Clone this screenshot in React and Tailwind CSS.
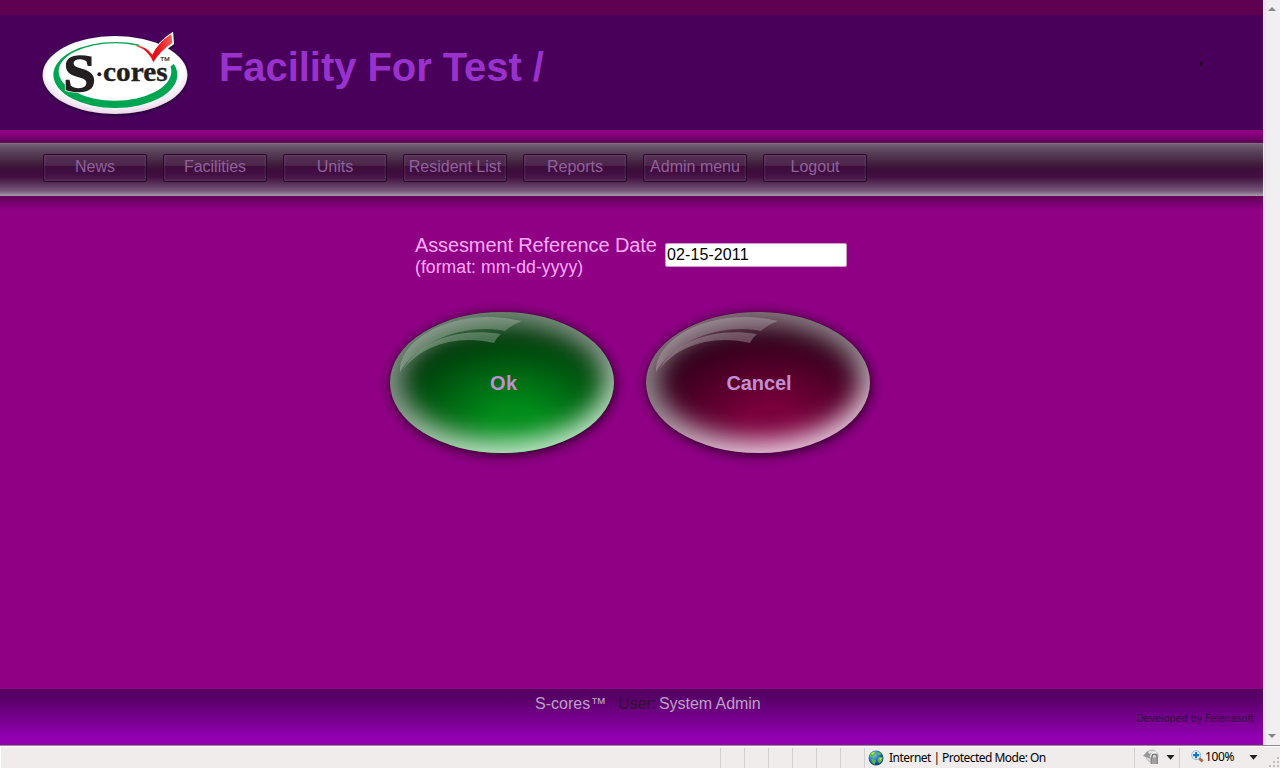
const NAV = ['News', 'Facilities', 'Units', 'Resident List', 'Reports', 'Admin menu', 'Logout'];

function Logo() {
  return (
    <svg className="block h-[110px] w-[170px] shrink-0" viewBox="0 0 510 330">
      <defs>
        <radialGradient id="plate" cx="50%" cy="43%" r="57%">
          <stop offset="80%" stopColor="#fff" />
          <stop offset="100%" stopColor="#ead5ea" />
        </radialGradient>
        <linearGradient id="tick" x1="0" y1="0" x2="1" y2="0">
          <stop offset="0" stopColor="#e8602c" />
          <stop offset=".25" stopColor="#e5141b" />
          <stop offset=".6" stopColor="#e5141b" />
          <stop offset="1" stopColor="#f46058" />
        </linearGradient>
        <clipPath id="ringGap">
          <path d="M0 0H328V120L420 140L436 128L510 118V330H0Z" />
        </clipPath>
        <filter id="plateShadow" x="-10%" y="-10%" width="120%" height="125%">
          <feDropShadow dx="0" dy="4" stdDeviation="4" floodColor="#180020" floodOpacity=".75" />
        </filter>
      </defs>
      <g filter="url(#plateShadow)">
        <ellipse cx="255" cy="165" rx="217" ry="117" fill="url(#plate)" />
        <path d="M366 100 Q386 62 429 35 L432 72 Q398 94 372 128Z" fill="#fff" />
      </g>
      <path clipPath="url(#ringGap)" fillRule="evenodd" fill="#00a551" d="M70 164 A186 98 0 0 1 442 164 A186 100 0 0 1 70 164Z M86 154 A169 84 0 0 1 424 154 A169 88 0 0 1 86 154Z" />
      <path d="M318 76 Q352 82 367 104 Q384 68 424 42 L427 69 Q391 92 370 127 Q356 90 318 78Z" fill="url(#tick)" />
      <text x="100" y="212" fontFamily="Liberation Serif, serif" fontWeight="700" fontSize="160" textLength="98" lengthAdjust="spacingAndGlyphs" fill="#231f20" stroke="#fff" strokeWidth="8" paintOrder="stroke">S</text>
      <text x="100" y="212" fontFamily="Liberation Serif, serif" fontWeight="700" fontSize="160" textLength="98" lengthAdjust="spacingAndGlyphs" fill="#231f20" stroke="#231f20" strokeWidth="4">S</text>
      <circle cx="208" cy="163" r="6" fill="#231f20" />
      <text x="219" y="182" fontFamily="Liberation Serif, serif" fontWeight="700" fontSize="81" textLength="194" lengthAdjust="spacingAndGlyphs" fill="#231f20" stroke="#231f20" strokeWidth="1">cores</text>
      <text x="391" y="123" fontFamily="Liberation Sans, sans-serif" fontSize="18" textLength="28" lengthAdjust="spacingAndGlyphs" fill="#231f20" stroke="#231f20" strokeWidth=".5">TM</text>
    </svg>
  );
}

function OvalButton({ id, label, base, dark, glow, labelX, labelWidth }) {
  return (
    <button type="button" className="block h-[170px] w-[256px] shrink-0 p-0">
      <svg className="block h-[170px] w-[256px]" viewBox="0 0 256 170">
        <defs>
          <clipPath id={id + 'Clip'}><ellipse cx="128" cy="82.5" rx="112" ry="70.5" /></clipPath>
          <radialGradient id={id + 'Base'} gradientUnits="userSpaceOnUse" cx="0" cy="0" r="1" gradientTransform="translate(142 124) scale(128 88)">
            <stop offset="0" stopColor={base} />
            <stop offset=".2" stopColor={base} />
            <stop offset="1" stopColor={dark} />
          </radialGradient>
          <linearGradient id={id + 'Rim'} gradientUnits="userSpaceOnUse" x1="85" y1="12" x2="128" y2="153">
            <stop offset="0" stopColor="#a0a0a0" stopOpacity=".76" />
            <stop offset=".5" stopColor="#b5b5b5" stopOpacity=".78" />
            <stop offset="1" stopColor={glow} stopOpacity=".98" />
          </linearGradient>
          <filter id={id + 'Blur'} x="-30%" y="-30%" width="160%" height="160%"><feGaussianBlur stdDeviation="12" /></filter>
          <filter id={id + 'Shadow'} x="-20%" y="-20%" width="140%" height="140%"><feGaussianBlur stdDeviation="5.5" /></filter>
        </defs>
        <ellipse cx="129" cy="84.5" rx="113" ry="71.5" fill="#250020" opacity=".9" filter={'url(#' + id + 'Shadow)'} />
        <ellipse cx="128" cy="82.5" rx="112" ry="70.5" fill={'url(#' + id + 'Base)'} />
        <g clipPath={'url(#' + id + 'Clip)'}>
          <path fillRule="evenodd" d="M-30 -30H286V200H-30Z M28 82A101 58 0 0 0 230 82A101 58 0 0 0 28 82Z" fill={'url(#' + id + 'Rim)'} filter={'url(#' + id + 'Blur)'} />
        </g>
        <path d="M26 72 C24 40 80 5 148 21 Q137 25 131 31 C91 23 46 40 26 72Z" fill="#fff" fillOpacity=".22" />
        <path d="M29 70 C47 38 88 28 127 34 Q122 38 120 43 C82 34 47 46 29 70Z" fill="#fff" fillOpacity=".25" />
        <text x={labelX} y="90" textLength={labelWidth} fontFamily="Liberation Sans, sans-serif" fontWeight="700" fontSize="20" fill="#c18fd3">{label}</text>
      </svg>
    </button>
  );
}

function Globe() {
  return (
    <svg className="block size-4 shrink-0" viewBox="0 0 16 16">
      <defs>
        <radialGradient id="sea" cx="35%" cy="30%" r="75%">
          <stop offset="0" stopColor="#8cc9f4" /><stop offset=".5" stopColor="#2a70c8" /><stop offset="1" stopColor="#123764" />
        </radialGradient>
      </defs>
      <circle cx="8" cy="8" r="7.5" fill="url(#sea)" />
      <path d="M2 3.5 5 1.2 8.5 2 7 5 5 6 4.5 8 2 6.5Z M9 1.3 13 3.2 12 5.5 9.5 5Z M3 9 7 9.5 8 11 6.5 14.5 4.5 13Z M10.5 7 14.8 7 14 11 11 13.5 9.5 10Z" fill="#55b948" />
      <path d="M3 3.5 5.5 2 7 2.6 4.5 5Z M11.5 8 13.8 8 12 11Z" fill="#b4e56b" />
    </svg>
  );
}

function Caret() {
  return <svg className="block h-[5px] w-[9px] shrink-0" viewBox="0 0 9 5"><path d="M.5 0h8L4.5 4.7Z" fill="#222" /></svg>;
}

function StatusBar() {
  return (
    <footer className="flex h-[23px] w-full border-t border-[#918b91] bg-[#f0eceb] text-black">
      <div className="flex h-full w-full border-l border-t border-white pt-px">
        <div className="w-[719px] shrink-0" />
        {[0, 1, 2, 3, 4, 5].map((n) => <div key={n} className="w-6 shrink-0 border-l border-[#d2d0ce]" />)}
        <div className="flex w-[270px] shrink-0 items-center border-l border-[#d2d0ce] pb-px pl-[3px]">
          <Globe />
          <span className="ml-[5px] whitespace-nowrap font-['Noto_Sans',sans-serif] text-[12px] leading-4 tracking-[-0.53px]">Internet | Protected Mode: On</span>
        </div>
        <div className="flex w-[45px] shrink-0 items-center border-l border-[#d2d0ce] pb-[2px] pl-2">
          <svg className="block h-4 w-[17px]" viewBox="0 0 17 16">
            <circle cx="9" cy="7" r="6" fill="#e1e1e1" stroke="#b5b5b5" />
            <path d="M0 7 4.5 2 6 4.8 9 4 6.5 7 8 10 4.5 8.5Z" fill="#969696" />
            <path d="M8 6 13 3" stroke="#fff" strokeWidth="2" />
            <path d="M9 9V7.8a2.5 2.5 0 0 1 5 0V9" fill="none" stroke="#777" strokeWidth="1.4" />
            <path d="M7.5 8.5h7.5V15H7.5Z" fill="#888" /><path d="M9 10h4.5M9 12h4.5M9 14h4.5" stroke="#ddd" strokeWidth=".6" />
          </svg>
          <span className="ml-[6px]"><Caret /></span>
        </div>
        <div className="flex grow items-center border-l border-[#d2d0ce] pl-[11px]">
          <svg className="mb-[3px] block h-[13px] w-[13px]" viewBox="0 0 14 14">
            <path d="m8 8 4.5 4.5" stroke="#a56c43" strokeWidth="3" />
            <circle cx="5.5" cy="5.5" r="4.8" fill="#e4f4ff" stroke="#9bb4ca" />
            <path d="M5.5 2.2v6.6M2.2 5.5h6.6" stroke="#1671ca" strokeWidth="2.2" />
          </svg>
          <span className="mb-[2px] ml-px w-[29px] font-['Noto_Sans',sans-serif] text-[12px] leading-4 tracking-[-0.4px]">100%</span>
          <span className="mb-[2px] ml-[15px]"><Caret /></span>
          <svg className="ml-auto block h-[11px] w-[11px] self-end" viewBox="0 0 11 11"><path d="M8 0h2v2H8ZM4 4h2v2H4ZM8 4h2v2H8ZM0 8h2v2H0ZM4 8h2v2H4ZM8 8h2v2H8Z" fill="#c1bfbf" /></svg>
        </div>
      </div>
    </footer>
  );
}

export default function App() {
  return (
    <div className="flex h-[768px] w-[1280px] flex-col overflow-hidden bg-[#8f0085] font-['Liberation_Sans',sans-serif]">
      <div className="flex h-[745px]">
        <div className="flex w-[1263px] flex-col">
          <div className="h-[15px] bg-[#600050]" />
          <header className="flex h-[115px] bg-[#48005a] pl-[30px] pt-[5px]">
            <Logo />
            <h1 className="ml-[19px] mt-[24px] whitespace-nowrap text-[40px] font-bold leading-[46px] tracking-[-0.06px] text-[#9932cc]">Facility For Test /</h1>
            <svg className="ml-auto mr-[60px] mt-[34px] h-[12px] w-[3px]" viewBox="0 0 3 12"><path d="M0 0h2v1H0ZM0 8h2v3H1v1H0Z" fill="#210014" /></svg>
          </header>
          <div className="h-[13px] bg-gradient-to-b from-[#8f0085] from-20% to-[#5c0055]" />
          <nav className="flex h-[53px] gap-[16px] bg-[linear-gradient(to_bottom,#827783_0%,#705e71_3%,#59415a_17%,#43203f_38%,#3c0d3b_50%,#430f43_64%,#562f56_76%,#78597a_91%,#a18ca1_98%,#a993aa_100%)] pl-[43px] pt-[11px]">
            {NAV.map((n) => (
              <a key={n} className="flex h-7 w-[104px] items-start justify-center whitespace-nowrap rounded-[2px] border border-[#250727] bg-[linear-gradient(to_bottom,#573155_0%,#4b2549_42%,#3e0b3d_43%,#420f42_72%,#4e204e_100%)] pt-[2px] text-[16px] leading-[20px] text-[#91619b] shadow-[inset_0_0_2px_1px_rgba(160,120,160,0.22)]">{n}</a>
            ))}
          </nav>
          <div className="h-[14px] bg-gradient-to-b from-[#610058] to-[#8f0085]" />
          <main className="flex grow flex-col">
            <div className="flex h-[90px] pl-[415px] pt-[24px] text-[#ffacff]">
              <div className="w-[250px]">
                <div className="whitespace-nowrap text-[20px] leading-[23px] tracking-[-0.12px]">Assesment Reference Date</div>
                <div className="text-[17.6px] leading-[20px] tracking-[0.05px]">(format: mm-dd-yyyy)</div>
              </div>
              <input readOnly value="02-15-2011" className="mt-[9px] h-[24px] w-[182px] rounded-[2px] border border-[#c99bc8] bg-white px-px text-[16px] leading-[20px] tracking-[0.1px] text-black outline-none" />
            </div>
            <div className="flex pl-[374px]">
              <OvalButton id="ok" label="Ok" base="#008b19" dark="#003b0a" glow="#c3eaca" labelX={116} labelWidth={27} />
              <OvalButton id="cancel" label="Cancel" base="#7a003c" dark="#300019" glow="#eccae0" labelX={96.5} labelWidth={65} />
            </div>
          </main>
          <div className="h-[56px] bg-[linear-gradient(to_bottom,#530060_0%,#5c006c_20%,#8500a0_70%,#9200b1_85%,#9200b1_100%)]">
            <div className="flex h-6 whitespace-pre pl-[535px] pt-[5px] text-[16px] leading-[20px] text-[#bda0c5]">
              <span className="w-[83px]">S-cores™</span><span className="w-[41px] text-[#2b162d]">User:</span><span className="tracking-[-0.05px]">System Admin</span>
            </div>
            <div className="whitespace-nowrap pr-[9px] text-right font-['DejaVu_Sans',sans-serif] text-[10px] leading-[12px] tracking-[-0.24px] text-[#35113d]">Developed by Felenasoft</div>
          </div>
        </div>
        <div className="flex w-[17px] flex-col items-center justify-between border-l border-white bg-gradient-to-r from-[#e5e3e5] to-[#f1eff1] to-20% py-[6px]">
          <svg className="h-[6px] w-2" viewBox="0 0 8 6"><path d="M0 5h8L4 1Z" fill="#888" /></svg>
          <svg className="h-[6px] w-2" viewBox="0 0 8 6"><path d="M0 1h8L4 5Z" fill="#888" /></svg>
        </div>
      </div>
      <StatusBar />
    </div>
  );
}
